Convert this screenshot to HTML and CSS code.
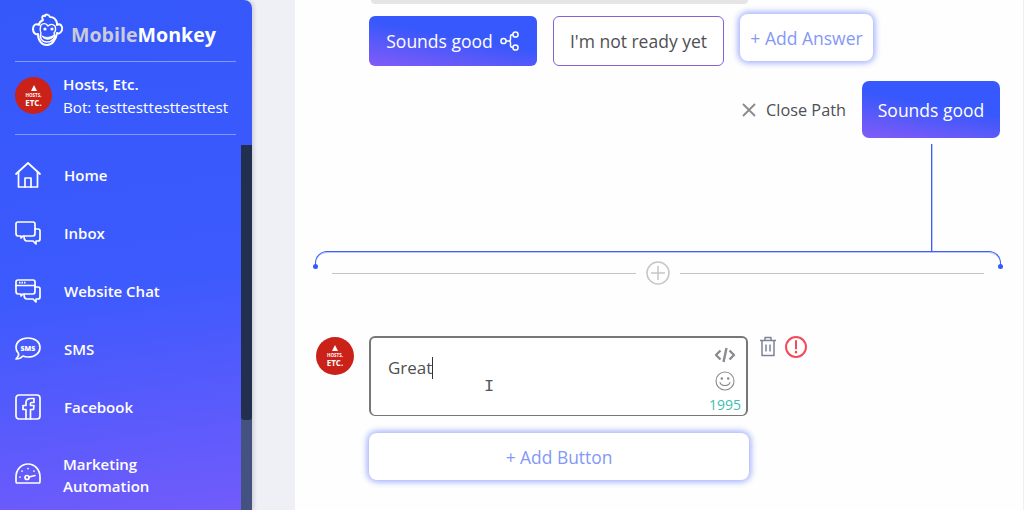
FILE: index.html
```html
<!DOCTYPE html>
<html lang="en">
<head>
  <meta charset="UTF-8">
  <meta name="viewport" content="width=device-width, initial-scale=1.0">
  <title>MobileMonkey</title>
  <link rel="stylesheet" href="styles.css">
</head>
<body>

<aside class="sidebar">
  <div class="logo">
    <svg class="logo-mark" width="32" height="34" viewBox="0 0 32 34" fill="none" stroke="#fff" stroke-width="2" stroke-linecap="round" stroke-linejoin="round">
      <path d="M11 7 C9 4 11 2 13 3 C13 1 17 1 18 4 C21 4 24 6 25 10 C25 11 25 12 25 12 C28 10 31 13 30 17 C29 20 27 21 25 20 C24 27 20 32 15 32 C10 32 6 28 6 21 C3 22 1 19 1 16 C1 12 4 10 7 12 C7 10 9 8 11 7 Z" fill="#3558fb"/>
      <path d="M9 12 C11 10 14 10 16 13 C18 11 21 11 23 13 C24 16 23 19 22 20 C24 24 21 29 15 29 C10 29 7 25 9 20 C8 18 8 15 9 12 Z" stroke-width="1.4"/>
      <circle cx="13" cy="16" r="1.6" fill="#fff" stroke="none"/>
      <circle cx="20" cy="16" r="1.6" fill="#fff" stroke="none"/>
      <path d="M10 23 C13 25 18 25 22 22 C21 27 12 28 10 23 Z" fill="#fff" stroke-width="1"/>
    </svg>
    <span class="logo-text"><span class="logo-dim">Mobile</span>Monkey</span>
  </div>

  <div class="account">
    <div class="avatar">
      <svg width="6" height="6" viewBox="0 0 7 7" fill="#fff"><path d="M3.500 0 L7 7 H0 Z"/></svg>
      <span class="avatar-small">HOSTS,</span>
      <span class="avatar-big">ETC.</span>
    </div>
    <div class="account-text">
      <div class="account-name">Hosts, Etc.</div>
      <div class="account-bot">Bot: testtesttesttesttest</div>
    </div>
  </div>

  <div class="nav-wrap">
    <nav class="nav">
      <a class="nav-item">
        <svg class="nav-icon" width="26" height="26" viewBox="0 0 26 26" fill="none" stroke="#fff" stroke-width="1.7" stroke-linejoin="round" stroke-linecap="round">
          <path d="M1 12 L13 1 L25 12"/>
          <path d="M3.500 10 V25 H22.500 V10"/>
          <path d="M10 25 V16 H16 V25"/>
        </svg>
        <span>Home</span>
      </a>
      <a class="nav-item">
        <svg class="nav-icon" width="26" height="24" viewBox="0 0 26 24" fill="none" stroke="#fff" stroke-width="1.7" stroke-linejoin="round" stroke-linecap="round">
          <path d="M3 1 H18 Q20 1 20 3 V12 Q20 15 18 15 H8 L6 17 V15 H3 Q1 15 1 12 V3 Q1 1 3 1 Z"/>
          <path d="M20 8 H23 Q25 8 25 10 V18 Q25 20 23 20 H21 V23 L18 20 H12 Q9 20 9 15"/>
        </svg>
        <span>Inbox</span>
      </a>
      <a class="nav-item">
        <svg class="nav-icon" width="26" height="24" viewBox="0 0 26 24" fill="none" stroke="#fff" stroke-width="1.7" stroke-linejoin="round" stroke-linecap="round">
          <path d="M3 1 H18 Q20 1 20 3 V12 Q20 15 18 15 H8 L6 17 V15 H3 Q1 15 1 12 V3 Q1 1 3 1 Z"/>
          <path d="M1 6.500 H20"/>
          <path d="M4 3.700 H11" stroke-dasharray="1.500 1" stroke-linecap="butt"/>
          <path d="M20 8 H23 Q25 8 25 10 V18 Q25 20 23 20 H21 V23 L18 20 H12 Q9 20 9 15"/>
        </svg>
        <span>Website Chat</span>
      </a>
      <a class="nav-item">
        <svg class="nav-icon" width="26" height="24" viewBox="0 0 26 24" fill="none" stroke="#fff" stroke-width="1.7" stroke-linejoin="round" stroke-linecap="round">
          <path d="M13 1 C20 1 25 5 25 10.500 C25 16 20 20 13 20 C11 20 10 20 8 19 C6 21 4 22 1 22 C3 20 4 18 3.500 16.500 C2 15 1 13 1 10.500 C1 5 6 1 13 1 Z"/>
          <text class="sms-glyph" x="13" y="13.500" text-anchor="middle">SMS</text>
        </svg>
        <span>SMS</span>
      </a>
      <a class="nav-item">
        <svg class="nav-icon" width="26" height="26" viewBox="0 0 26 26" fill="none" stroke="#fff" stroke-width="1.7" stroke-linejoin="round" stroke-linecap="round">
          <rect x="1" y="1" width="24" height="24" rx="3"/>
          <path d="M11 25 V15.500 H8 V11.500 H11 V8.500 C11 5.500 13.500 4.500 16 4.500 H19 V8.500 H16.500 Q15.500 8.500 15.500 9.500 V11.500 H19 L18.500 15.500 H15.500 V25"/>
        </svg>
        <span>Facebook</span>
      </a>
      <a class="nav-item nav-item-tall">
        <svg class="nav-icon" width="26" height="21" viewBox="0 0 26 21" fill="none" stroke="#fff" stroke-width="1.7" stroke-linejoin="round" stroke-linecap="round">
          <path d="M2 20 Q1 20 1 18 V14 C1 7 6 1 13 1 C20 1 25 7 25 14 V18 Q25 20 24 20 Z"/>
          <circle cx="12" cy="14.500" r="2"/>
          <path d="M14 14 L20 12.500"/>
          <path d="M5 14 V14.100 M7 8 V8.100 M13 5.500 V5.600 M19 8 V8.100"/>
        </svg>
        <span class="nav-two-line">Marketing<br>Automation</span>
      </a>
    </nav>
    <div class="scrollbar"><div class="scroll-thumb"></div></div>
  </div>
</aside>

<main class="canvas">
  <div class="top-bar"></div>

  <div class="answers">
    <button class="btn btn-gradient btn-answer">
      Sounds good
      <svg width="20" height="20" viewBox="0 0 20 20" fill="none" stroke="#fff" stroke-width="1.500">
        <circle cx="3.500" cy="10" r="2.600"/>
        <circle cx="15.500" cy="3.500" r="2.600"/>
        <circle cx="15.500" cy="16.500" r="2.600"/>
        <path d="M6 10 H9 Q10.500 10 10.500 8 V5.500 Q10.500 3.500 13 3.500 M9 10 Q10.500 10 10.500 12 V14.500 Q10.500 16.500 13 16.500"/>
      </svg>
    </button>
    <button class="btn btn-outline">I'm not ready yet</button>
    <button class="btn btn-add btn-add-answer">+ Add Answer</button>
  </div>

  <div class="path-row">
    <span class="close-path">
      <svg width="14" height="14" viewBox="0 0 14 14" stroke="#8a8a8e" stroke-width="1.800"><path d="M1 1 L13 13 M13 1 L1 13"/></svg>
      Close Path
    </span>
    <button class="btn btn-gradient btn-path">Sounds good</button>
  </div>

  <div class="connector"></div>
  <div class="bracket"></div>

  <div class="divider">
    <span class="divider-line"></span>
    <svg width="24" height="24" viewBox="0 0 24 24" fill="none" stroke="#c6c6c6" stroke-width="1.500">
      <circle cx="12" cy="12" r="11"/>
      <path d="M12 5 V19 M5 12 H19"/>
    </svg>
    <span class="divider-line"></span>
  </div>

  <div class="message">
    <div class="avatar avatar-msg">
      <svg width="6" height="6" viewBox="0 0 7 7" fill="#fff"><path d="M3.500 0 L7 7 H0 Z"/></svg>
      <span class="avatar-small">HOSTS,</span>
      <span class="avatar-big">ETC.</span>
    </div>
    <div class="message-body">
      <div class="editor">
        <div class="editor-text">Great<span class="caret"></span></div>
        <span class="i-beam">I</span>
        <div class="editor-tools">
          <svg width="22" height="16" viewBox="0 0 22 16" fill="none" stroke="#8b8b90" stroke-width="2.400" stroke-linejoin="round">
            <path d="M6.500 3.500 L2 8 L6.500 12.500 M15.500 3.500 L20 8 L15.500 12.500"/>
            <path d="M12.500 1 L9.500 15"/>
          </svg>
          <svg width="20" height="20" viewBox="0 0 20 20" fill="none" stroke="#8b8b90" stroke-width="1.100" stroke-linecap="round">
            <circle cx="10" cy="10" r="9"/>
            <circle cx="6.800" cy="7.500" r="0.700" fill="#8b8b90"/>
            <circle cx="13.200" cy="7.500" r="0.700" fill="#8b8b90"/>
            <path d="M5 11.500 C6.500 15.500 13.500 15.500 15 11.500"/>
          </svg>
          <span class="counter">1995</span>
        </div>
      </div>
      <button class="btn btn-add btn-add-button">+ Add Button</button>
    </div>
    <div class="message-actions">
      <svg width="18" height="21" viewBox="0 0 18 21" fill="none" stroke="#7d8296" stroke-width="1.500" stroke-linejoin="round">
        <path d="M1 4.500 H17"/>
        <path d="M6 4.500 V1.500 H12 V4.500"/>
        <path d="M3 4.500 V19.500 H15 V4.500"/>
        <path d="M7 8.500 V15.500 M11 8.500 V15.500"/>
      </svg>
      <svg width="22" height="22" viewBox="0 0 22 22" fill="none" stroke="#f4485b" stroke-width="2">
        <circle cx="11" cy="11" r="10"/>
        <path d="M11 5 V12.500" stroke-linecap="round"/>
        <path d="M11 16 V16.200" stroke-linecap="round" stroke-width="2.400"/>
      </svg>
    </div>
  </div>
</main>

</body>
</html>
```

FILE: styles.css
```css
:root {
  --blue: #3658fc;
  --purple: #9a5cf5;
  --line-blue: #3f5ffb;
  --text-dark: #4f4f54;
  --add-text: #8498f6;
  --glow: #a0aefb;
}

* {
  box-sizing: border-box;
}

html, body {
  margin: 0;
  height: 510px;
  overflow: hidden;
}

body {
  display: flex;
  font-family: "Open Sans", "Liberation Sans", sans-serif;
  background-color: #eff0f5;
  color: var(--text-dark);
}

button {
  font-family: inherit;
  cursor: pointer;
}

/* sidebar */
.sidebar {
  flex: 0 0 252px;
  height: 510px;
  display: flex;
  flex-direction: column;
  color: #fff;
  border-top-right-radius: 8px;
  background: linear-gradient(172deg, #3558fb 0%, #3c5afd 55%, #725bfb 100%);
  box-shadow: 1px 0 4px rgba(60, 60, 90, 0.25);
  overflow: hidden;
}

.logo {
  height: 61px;
  padding: 13px 0 0 32px;
  display: flex;
  align-items: flex-start;
  gap: 7px;
}

.logo-text {
  margin-top: 6px;
  font-weight: 700;
  font-size: 19.600px;
  line-height: 32px;
}

.logo-dim {
  color: #c9cbdb;
}

.account {
  margin: 0 16px 0 15px;
  height: 74px;
  padding-bottom: 5px;
  display: flex;
  align-items: center;
  gap: 11px;
  border-top: 1px solid #8199fb;
  border-bottom: 1px solid #8199fb;
}

.avatar {
  flex: none;
  width: 37px;
  height: 37px;
  border-radius: 50%;
  background-color: #ca2119;
  display: flex;
  flex-direction: column;
  align-items: center;
  justify-content: center;
  color: #fff;
  line-height: 1;
  font-weight: 700;
}

.avatar-small {
  margin-top: 2px;
  font-size: 4.500px;
  line-height: 5px;
}

.avatar-big {
  margin-top: 1px;
  font-size: 8px;
  line-height: 8px;
}

.account-text {
  font-size: 15.200px;
  line-height: 23px;
}

.account-name {
  font-weight: 600;
}

.nav-wrap {
  flex: 1;
  display: flex;
  min-height: 0;
}

.nav {
  flex: 1;
  padding-top: 11px;
}

.nav-item {
  height: 58px;
  padding-left: 15px;
  display: flex;
  align-items: center;
  font-size: 15px;
  font-weight: 600;
  line-height: 22px;
}

.nav-item-tall {
  height: 64px;
  margin-top: 7px;
}

.nav-icon {
  flex: none;
  width: 26px;
  margin-right: 23px;
}

.nav-item-tall .nav-icon {
  margin-top: -4px;
}

.nav-two-line {
  margin-left: -1px;
}

.sms-glyph {
  font-size: 7px;
  font-weight: 800;
  fill: #fff;
  stroke: none;
}

.scrollbar {
  flex: 0 0 11px;
  margin-top: 10px;
  background-color: #44527f;
}

.scroll-thumb {
  height: 275px;
  border-radius: 0 0 3px 3px;
  background-color: #232f4f;
}

/* builder */
.canvas {
  width: 728px;
  margin-left: 43px;
  height: 510px;
  padding-left: 74px;
  background-color: #fefefe;
  overflow: hidden;
}

.top-bar {
  width: 377px;
  height: 4px;
  margin-left: 2px;
  background-color: #e5e5e5;
  border-radius: 0 0 4px 4px;
}

.answers {
  margin-top: 10px;
  display: flex;
  align-items: flex-start;
  gap: 16px;
}

.btn {
  height: 50px;
  border-radius: 6px;
  font-size: 17.500px;
  padding: 0;
}

.btn-gradient {
  border: none;
  color: #fff;
  background: linear-gradient(190deg, var(--blue) 42%, var(--purple) 118%);
}

.btn-answer {
  width: 168px;
  margin-top: 2px;
  display: flex;
  align-items: center;
  justify-content: center;
  gap: 7px;
}

.btn-outline {
  width: 171px;
  margin-top: 2px;
  background-color: #fff;
  border: 1px solid #8262d6;
  color: var(--text-dark);
}

.btn-add {
  background-color: #fff;
  border: none;
  color: var(--add-text);
  border-radius: 8px;
  box-shadow: 0 0 6px 2px var(--glow);
}

.btn-add-answer {
  width: 133px;
  height: 47px;
}

.path-row {
  margin-top: 15px;
  margin-right: 23px;
  display: flex;
  justify-content: flex-end;
  align-items: center;
  gap: 16px;
}

.close-path {
  display: flex;
  align-items: center;
  gap: 10px;
  font-size: 16.300px;
}

.btn-path {
  width: 138px;
  height: 57px;
  border-radius: 7px;
}

.connector {
  width: 1px;
  height: 107px;
  margin: 6px 0 0 562px;
  background-color: var(--line-blue);
  box-shadow: 1px 0 0 rgba(63, 95, 251, 0.35);
}

.bracket {
  position: relative;
  width: 686px;
  height: 16px;
  margin-left: -54px;
  border: 1px solid var(--line-blue);
  border-bottom: none;
  border-radius: 12px 12px 0 0;
  box-shadow: inset 0 1px 0 rgba(63, 95, 251, 0.35);
}

.bracket::before,
.bracket::after {
  content: "";
  position: absolute;
  bottom: -2px;
  width: 5px;
  height: 5px;
  border-radius: 50%;
  background-color: var(--blue);
}

.bracket::before {
  left: -3px;
}

.bracket::after {
  right: -3px;
}

.divider {
  width: 652px;
  height: 24px;
  margin: -6px 0 0 -37px;
  display: flex;
  align-items: center;
  gap: 10px;
}

.divider-line {
  flex: 1;
  height: 1px;
  background-color: #c4c4c4;
}

.message {
  position: relative;
  margin: 51px 0 0 -53px;
  display: flex;
  align-items: flex-start;
}

.avatar-msg {
  width: 38px;
  height: 38px;
  margin: 1px 15px 0 0;
}

.message-body {
  width: 380px;
}

.editor {
  position: relative;
  width: 379px;
  height: 80px;
  padding: 18px 0 0 17px;
  display: flex;
  justify-content: space-between;
  border: 2px solid #777;
  border-bottom-width: 1px;
  border-radius: 6px;
  background-color: #fff;
  font-size: 17px;
  line-height: 24px;
}

.editor-text {
  height: 24px;
}

.caret {
  display: inline-block;
  width: 1px;
  height: 22px;
  vertical-align: -5px;
  background-color: #333;
}

.i-beam {
  position: absolute;
  left: 113px;
  top: 39px;
  font-family: "Liberation Mono", monospace;
  font-size: 17px;
  line-height: 20px;
  color: #555;
}

.editor-tools {
  margin: -9px 3px 0 0;
  width: 36px;
  display: flex;
  flex-direction: column;
  align-items: center;
  gap: 8px;
  font-size: 14px;
}

.counter {
  margin-top: -2px;
  line-height: 16px;
  color: #3fbdb4;
}

.btn-add-button {
  display: block;
  width: 100%;
  height: 47px;
  margin-top: 17px;
  font-size: 17.400px;
}

.message-actions {
  margin-left: 10px;
  display: flex;
  align-items: flex-start;
  gap: 8px;
}
```
